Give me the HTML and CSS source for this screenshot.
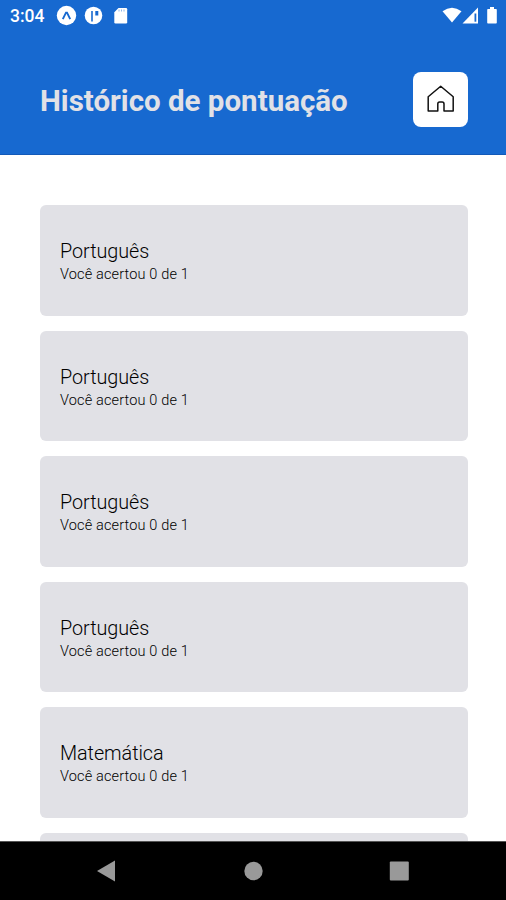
FILE: index.html
```
<!DOCTYPE html>
<html lang="pt-BR">
<head>
<meta charset="utf-8">
<title>Histórico de pontuação</title>
<link rel="stylesheet" href="styles.css">
</head>
<body>
<div class="screen">
  <header class="header">
    <div class="status">
      <span class="time">3:04</span>
      <svg class="notifications" width="74" height="22" viewBox="0 0 74 22">
        <circle cx="10.5" cy="10.500" r="9.7" fill="#fff"/>
        <path d="M6.8 14.1 10 7.700h1l3.2 6.4" fill="none" stroke="#1769d0" stroke-width="1.9"/>
        <circle cx="37.5" cy="10.500" r="8.8" fill="#fff"/>
        <path d="M36 16.500V6" fill="none" stroke="#1769d0" stroke-width="1.600"/>
        <path d="M39.300 6h3v4.500h-3z" fill="#1769d0"/>
        <path d="M62.5 3H70q1.2 0 1.2 1.2v13.1q0 1.2-1.2 1.2H59.500q-1.200 0-1.200-1.200V7.200z" fill="#fff"/>
        <path d="M63 4.500v2M65.500 4.500v2M68 4.500v2" stroke="#8fb6e8" stroke-width="1"/>
      </svg>
      <svg class="system" width="58" height="22" viewBox="0 0 58 22">
        <path d="M.5 6.200Q10-.8 19.500 6.200L10 17.500z" fill="#fff"/>
        <path d="M36 2.500v16H20.500z" fill="#fff"/>
        <path d="M32.500 8.500h1.800v8.200h-1.800z" fill="#1769d0"/>
        <path d="M46 4h2V2h4v2h2q.8 0 .8.800v13q0 .8-.8.800h-8q-.8 0-.8-.8v-13q0-.8.8-.8z" fill="#fff"/>
      </svg>
    </div>
    <div class="titlebar">
      <h1>Histórico de pontuação</h1>
      <button class="home" aria-label="Início">
        <svg width="28" height="30" viewBox="0 0 28 30">
          <path d="M1.200 12.800 13.700 2.200l12.500 10.600v14.200H17V20q0-2-1.800-2h-2.600Q10.800 18 10.800 20v7H1.200z" fill="none" stroke="#111" stroke-width="1.500" stroke-linejoin="round"/>
        </svg>
      </button>
    </div>
  </header>
  <main class="list">
    <article class="card"><h2>Português</h2><p>Você acertou 0 de 1</p></article>
    <article class="card"><h2>Português</h2><p>Você acertou 0 de 1</p></article>
    <article class="card"><h2>Português</h2><p>Você acertou 0 de 1</p></article>
    <article class="card"><h2>Português</h2><p>Você acertou 0 de 1</p></article>
    <article class="card"><h2>Matemática</h2><p>Você acertou 0 de 1</p></article>
    <article class="card"></article>
  </main>
  <nav class="navbar">
    <svg width="20" height="22" viewBox="0 0 20 22"><path d="M0 11 18 .5v21z" fill="#999"/></svg>
    <svg width="20" height="22" viewBox="0 0 20 22"><circle cx="10.500" cy="11" r="9.200" fill="#999"/></svg>
    <svg width="20" height="22" viewBox="0 0 20 22"><rect x=".8" y="1.500" width="19" height="19" rx="1" fill="#999"/></svg>
  </nav>
</div>
</body>
</html>
```
FILE: styles.css
```
* { box-sizing: border-box; }
body { margin: 0; font-family: Roboto, sans-serif; background: #fff; }
h1, h2, p { margin: 0; }
svg { display: block; flex: none; }

.screen { display: flex; flex-direction: column; height: 900px; overflow: hidden; }

.header { flex: none; height: 155px; background: #1769d0; border-bottom: 1px solid #1259b8; }
.status { display: flex; align-items: center; height: 32px; padding: 0 7px 0 10px; color: #fff; }
.time { width: 46px; font-size: 17.5px; font-weight: 500; line-height: 32px; }
.system { margin-left: auto; margin-right: -1px; }

.titlebar { display: flex; align-items: center; justify-content: space-between; height: 56px; margin-top: 39px; padding: 0 38px 0 40px; }
.titlebar h1 { padding-top: 3px; color: #e1e1e6; font-size: 29.5px; font-weight: 700; line-height: 36px; white-space: nowrap; }
.home { display: flex; align-items: center; justify-content: center; width: 55px; height: 55px; padding: 0; border: 0; border-radius: 8px; background: #fff; }

.list { display: flex; flex: 1; flex-direction: column; gap: 15px; min-height: 0; padding: 50px 38.5px 0 40px; overflow: hidden; }
.card { flex: none; height: 110.5px; padding: 35px 20px 0; border-radius: 6px; background: #e1e1e6; color: #000; }
.card h2 { font-size: 19.8px; font-weight: 300; line-height: 24px; letter-spacing: -0.05px; }
.card p { font-size: 14.5px; font-weight: 300; line-height: 22px; letter-spacing: 0.15px; }

.navbar { display: flex; flex: none; align-items: center; justify-content: space-between; height: 59px; padding: 0 97px; border-top: 1px solid #555; background: #000; }
```
